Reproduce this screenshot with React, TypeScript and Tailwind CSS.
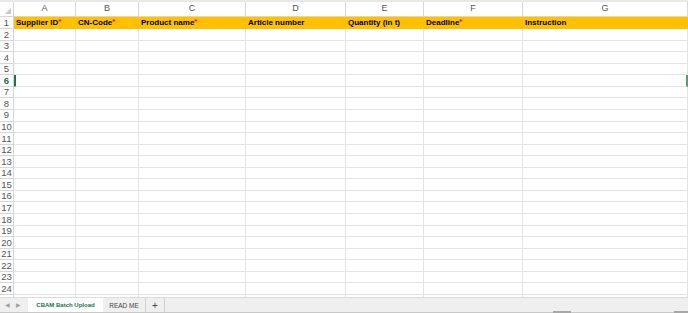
import React from "react";

const cols = ["A", "B", "C", "D", "E", "F", "G"];
const widths = "grid-cols-[14px_62px_63px_107px_100px_78px_99px_165px]";

const headers: { label: string; req?: boolean }[] = [
  { label: "Supplier ID", req: true },
  { label: "CN-Code", req: true },
  { label: "Product name", req: true },
  { label: "Article number" },
  { label: "Quantity (in t)" },
  { label: "Deadline", req: true },
  { label: "Instruction" },
];

const App = () => {
  const rows = Array.from({ length: 25 }, (_, i) => i + 1);

  return (
    <div className="w-[688px] h-[313px] bg-white flex flex-col overflow-hidden font-['Liberation_Sans',Arial,sans-serif]">
      <div className="flex-1 overflow-hidden border-t-2 border-[#e8e8e8]">
        {/* column letters */}
        <div className={`grid ${widths} h-[15px]`}>
          <div className="border-r border-b border-[#d6d6d6] bg-white relative">
            <div className="absolute right-[2px] bottom-[2px] w-0 h-0 border-l-[6px] border-l-transparent border-b-[6px] border-b-[#c8c8c8]" />
          </div>
          {cols.map((c) => (
            <div
              key={c}
              className="border-r border-b border-[#d6d6d6] text-[9px] text-[#555] flex items-center justify-center"
            >
              {c}
            </div>
          ))}
        </div>

        {rows.map((r) => (
          <div key={r} className={`grid ${widths} ${r === 1 ? "h-[12px]" : "h-[11.57px]"}`}>
            <div
              className={`border-r border-b border-[#d6d6d6] text-[9.5px] leading-none flex items-center justify-center ${
                r === 6 ? "text-[#217346] font-bold" : "text-[#555]"
              }`}
            >
              {r}
            </div>
            {cols.map((c, i) => {
              if (r === 1) {
                const h = headers[i];
                return (
                  <div
                    key={c}
                    className="bg-[#ffc000] border-r border-b border-[#ffc000] text-[8px] font-bold text-black flex items-center pl-[2px] whitespace-nowrap overflow-hidden"
                  >
                    {h.label}
                    {h.req && (
                      <span className="text-[#ff0000] text-[8px] font-bold relative -top-[1px]">*</span>
                    )}
                  </div>
                );
              }
              return (
                <div
                  key={c}
                  className={`border-r border-b border-[#e4e4e4] ${
                    r === 6 && i === 0 ? "border-l-2 border-l-[#217346]" : ""
                  } ${r === 6 && i === 6 ? "border-r-2 border-r-[#5a9a72]" : ""}`}
                />
              );
            })}
          </div>
        ))}
      </div>

      {/* sheet tabs */}
      <div className="h-[16px] bg-[#efefef] border-t border-[#dcdcdc] flex items-stretch relative">
        <div className="flex items-center gap-[6px] pl-[5px] w-[28px] text-[#a0a0a0] text-[6px]">
          <span>◀</span>
          <span>▶</span>
        </div>
        <div className="bg-white w-[75px] flex items-center justify-center text-[#217346] font-bold text-[6px]">
          CBAM Batch Upload
        </div>
        <div className="w-[43px] flex items-center justify-center text-[#444] text-[6.5px] border-r border-[#cfcfcf]">
          READ ME
        </div>
        <div className="w-[19px] flex items-center justify-center text-[#444] text-[10px] border-r border-[#cfcfcf]">
          +
        </div>
        <div className="absolute bottom-0 left-0 right-0 h-[1px] bg-[#c8c8c8]" />
        <div className="absolute bottom-0 left-[553px] w-[18px] h-[2px] bg-[#a8a8a8]" />
        <div className="absolute bottom-0 right-0 w-[14px] h-[2px] bg-[#a8a8a8]" />
      </div>
    </div>
  );
};

export default App;
